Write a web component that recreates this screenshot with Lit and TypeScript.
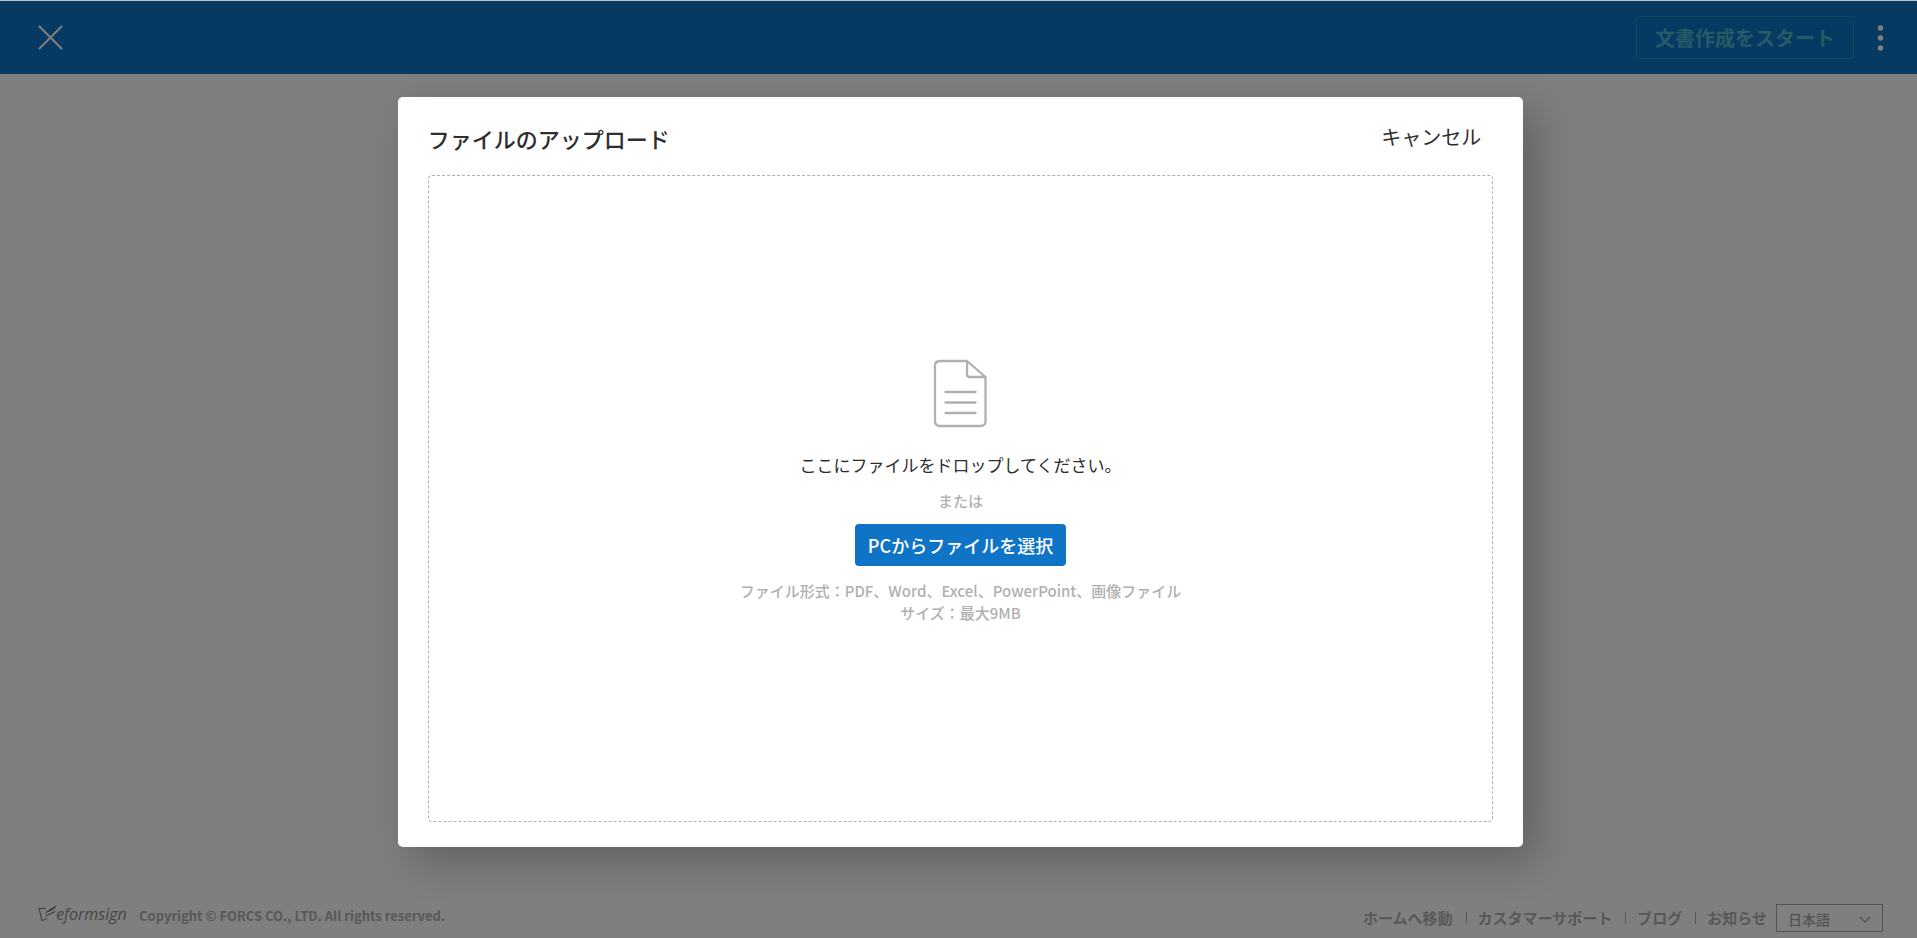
import { LitElement, html, css } from "lit";
import { customElement } from "lit/decorators.js";

@customElement("app-root")
export class AppRoot extends LitElement {
  static styles = css`
    * {
      box-sizing: border-box;
    }
    :host {
      display: flex;
      flex-direction: column;
      min-height: 100vh;
      box-sizing: border-box;
      position: relative;
      border-top: 1px solid #bcc3c8;
      background: #ffffff;
      color: #2e2e2e;
      font-family: "Noto Sans CJK JP", sans-serif;
    }
    button,
    select {
      font-family: inherit;
    }
    .topbar {
      display: flex;
      align-items: center;
      justify-content: space-between;
      height: 73px;
      padding: 0 24px 0 35px;
      background: #0f74c6;
    }
    .icon-button {
      display: flex;
      padding: 0;
      border: 0;
      background: none;
    }
    .actions {
      display: flex;
      align-items: center;
      gap: 14px;
    }
    .start {
      height: 43px;
      padding: 0 18px;
      border: 1px solid #2a8cae;
      border-radius: 4px;
      background: none;
      color: #4ab4cc;
      font-size: 20px;
      line-height: 28px;
      font-weight: 700;
    }
    .workspace {
      flex: 1;
    }
    .footer {
      display: flex;
      align-items: center;
      justify-content: space-between;
      padding: 0 34px 6px 38px;
      color: #b0b0b0;
      font-weight: 700;
    }
    .brand,
    .links {
      display: flex;
      align-items: center;
    }
    .brand {
      gap: 12px;
      padding-bottom: 4px;
    }
    .wordmark {
      font-family: "Open Sans", sans-serif;
      font-size: 16px;
      font-style: italic;
      font-weight: 400;
      fill: #8c8c8c;
    }
    .copyright {
      font-size: 13px;
      line-height: 20px;
    }
    .links a {
      color: inherit;
      text-decoration: none;
      font-size: 15px;
      line-height: 20px;
    }
    .links a + a::before {
      content: "";
      display: inline-block;
      width: 1px;
      height: 12px;
      margin: 0 11px 0 13px;
      background: currentColor;
    }
    .language {
      display: flex;
      align-items: center;
      margin-left: 9px;
      position: relative;
    }
    .language select {
      appearance: none;
      width: 107px;
      height: 28px;
      padding: 2px 11px 0;
      border: 1px solid #a8a8a8;
      border-radius: 0;
      background: none;
      color: #a8a8a8;
      font-size: 14px;
      font-weight: 500;
    }
    .language svg {
      position: absolute;
      right: 12px;
      top: 12px;
      pointer-events: none;
    }
    .overlay {
      position: absolute;
      inset: 0;
      display: flex;
      align-items: center;
      justify-content: center;
      padding: 5px 0 0 4px;
      background: rgba(0, 0, 0, 0.5);
    }
    .dialog {
      display: flex;
      flex-direction: column;
      height: 80vh;
      aspect-ratio: 3 / 2;
      padding: 0 30px 25px;
      border-radius: 5px;
      background: #ffffff;
      box-shadow: 14px 14px 40px rgba(0, 0, 0, 0.24);
    }
    .dialog-head {
      display: flex;
      align-items: center;
      justify-content: space-between;
      height: 78px;
      padding: 4px 10px 0 0;
    }
    .title {
      margin: 0;
      font-size: 22px;
      line-height: 32px;
      font-weight: 500;
    }
    .cancel {
      padding: 0 2px 2px;
      border: 0;
      background: none;
      color: inherit;
      font-size: 20px;
      line-height: 28px;
    }
    .dropzone {
      flex: 1;
      display: flex;
      flex-direction: column;
      align-items: center;
      justify-content: center;
      padding-bottom: 14px;
      border: 1px dashed #b0b0b0;
      border-radius: 4px;
      text-align: center;
    }
    .prompt {
      margin: 24px 0 0;
      font-size: 17px;
      line-height: 26px;
    }
    .muted {
      margin: 0;
      color: #b0b0b0;
      font-size: 15px;
      line-height: 22px;
      font-weight: 500;
    }
    .or {
      margin: 12px 0;
    }
    .pick {
      height: 42px;
      margin-bottom: 14px;
      padding: 0 13px;
      border: 0;
      border-radius: 4px;
      background: #0f74c6;
      color: #ffffff;
      font-size: 18px;
      line-height: 26px;
      font-weight: 500;
    }
  `;

  render() {
    return html`
      <header class="topbar">
        <button class="icon-button" aria-label="閉じる">
          <svg width="32" height="32" viewBox="0 0 32 32" fill="none" stroke="#fff" stroke-width="2" stroke-linecap="round">
            <path d="M4.500 4.500 26.500 26.500M26.500 4.500 4.500 26.500" />
          </svg>
        </button>
        <div class="actions">
          <button class="start">文書作成をスタート</button>
          <button class="icon-button" aria-label="メニュー">
            <svg width="25" height="32" viewBox="0 0 25 32" fill="#fff">
              <circle cx="12.500" cy="6" r="2.700" />
              <circle cx="12.500" cy="16" r="2.700" />
              <circle cx="12.500" cy="26" r="2.700" />
            </svg>
          </button>
        </div>
      </header>
      <main class="workspace"></main>
      <footer class="footer">
        <div class="brand">
          <svg width="89" height="24" viewBox="0 0 89 24" role="img" aria-label="eformsign">
            <path d="M7.500 4.500H1L4 16.500L9.500 14.500" fill="none" stroke="#8c8c8c" stroke-width="1.300" />
            <path d="M6.500 11.500C8 5 13 6 18.500 1C18 4.500 14 6.500 10 8C8.500 8.700 7.500 9.800 6.500 11.500ZM7 13.500C9 9 13 10 17.500 6.500C16.500 10.500 10.500 10 7 13.500Z" fill="#707070" />
            <text class="wordmark" x="18" y="16">eformsign</text>
          </svg>
          <span class="copyright">Copyright © FORCS CO., LTD. All rights reserved.</span>
        </div>
        <nav class="links">
          <a href="#home">ホームへ移動</a><a href="#support">カスタマーサポート</a><a href="#blog">ブログ</a><a href="#notice">お知らせ</a>
          <div class="language">
            <select aria-label="言語"><option>日本語</option></select>
            <svg width="12" height="8" viewBox="0 0 12 8" fill="none" stroke="#a0a0a0" stroke-width="1.200"><path d="M1 1 6 6 11 1" /></svg>
          </div>
        </nav>
      </footer>
      <div class="overlay">
        <section class="dialog" role="dialog" aria-modal="true" aria-labelledby="upload-title">
          <div class="dialog-head">
            <h1 class="title" id="upload-title">ファイルのアップロード</h1>
            <button class="cancel">キャンセル</button>
          </div>
          <div class="dropzone">
            <svg width="54" height="69" viewBox="0 0 54 69" fill="none" stroke="#b0b0b0" stroke-width="2.300" stroke-linecap="round" stroke-linejoin="round">
              <path d="M34 2H7Q2 2 2 7V62Q2 67 7 67H47.500Q52.500 67 52.500 62V18ZM34 2V15.500Q34 18 36.500 18H52.500M12.500 33H42.500M12.500 43.500H42.500M12.500 54H42.500" />
            </svg>
            <p class="prompt">ここにファイルをドロップしてください。</p>
            <p class="muted or">または</p>
            <button class="pick">PCからファイルを選択</button>
            <p class="muted">ファイル形式：PDF、Word、Excel、PowerPoint、画像ファイル</p>
            <p class="muted">サイズ：最大9MB</p>
          </div>
        </section>
      </div>
    `;
  }
}
